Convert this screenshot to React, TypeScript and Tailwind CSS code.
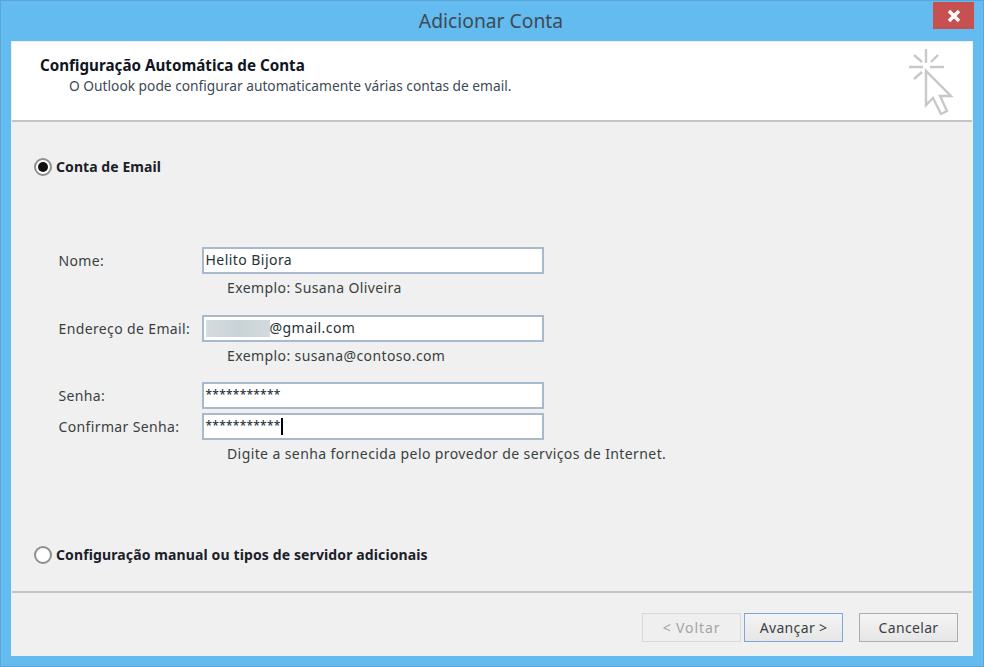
const font = { fontFamily: '"Noto Sans", sans-serif' };

function Radio({ checked }: { checked?: boolean }) {
  return (
    <span className="w-[18px] h-[18px] shrink-0 rounded-full border-2 border-[#8f8f8f] bg-white flex items-center justify-center">
      {checked && <span className="w-[10px] h-[10px] rounded-full bg-[#111]" />}
    </span>
  );
}

function Field({ label, children, mt }: { label: string; children: React.ReactNode; mt: string }) {
  return (
    <div className={`flex items-center ${mt}`}>
      <div className="w-[143px] text-[#3a3f3f] tracking-[0.37px] -ml-[0.5px] -mt-[1px]">{label}</div>
      <div className="w-[342px] h-[27px] border-2 border-[#a9b9cd] bg-white flex items-center pl-[2px] pb-[1px] text-[#263238] tracking-[0.45px] leading-[20px]">
        {children}
      </div>
    </div>
  );
}

function Hint({ text }: { text: string }) {
  return <div className="pl-[168px] h-[20px] mt-[4px] -mb-[1px] leading-[20px] text-[#3a3f3f] tracking-[0.4px]">{text}</div>;
}

function Stars() {
  return <span className="text-[12px] tracking-[0.25px] font-medium">***********</span>;
}

function Btn({ label, cls }: { label: string; cls: string }) {
  return <div className={`h-[29px] w-[99px] flex items-center justify-center border bg-gradient-to-b from-[#f4f4f4] to-[#e6e6e6] ${cls}`}>{label}</div>;
}

export default function App() {
  return (
    <div style={font} className="w-[984px] h-[667px] bg-[#63bbef] border border-[#5aa5d6] flex flex-col text-[14px] overflow-hidden">
      <div className="h-[40px] shrink-0 flex items-start relative">
        <div className="flex-1 text-center text-[19.3px] leading-[40px] text-[#3f4a55] pr-[2px]">Adicionar Conta</div>
        <div className="absolute right-[9px] top-[1px] w-[41px] h-[27px] bg-[#c75050] flex items-center justify-center">
          <svg width="14" height="14" viewBox="0 0 14 14"><path d="M2 2L12 12M12 2L2 12" stroke="#fff" strokeWidth="3.4" /></svg>
        </div>
      </div>
      <div className="mx-[10px] h-[615px] bg-[#f0f0f0] flex flex-col border border-[#e8f2f8]">
        <div className="h-[80px] shrink-0 bg-white border-b-2 border-[#c4c4c4] flex justify-between">
          <div className="pl-[28px] pt-[13px]">
            <div className="font-bold text-[15.2px] leading-[20px] text-[#10151f]">Configuração Automática de Conta</div>
            <div className="pl-[29px] leading-[20px] mt-[1px] text-[13.75px] text-[#3d4a55]">O Outlook pode configurar automaticamente várias contas de email.</div>
          </div>
          <svg className="mt-[6px] mr-[18px]" width="46" height="68" viewBox="0 0 46 68" fill="none" stroke="#c8c8c8" strokeWidth="2.4">
            <path d="M18 1V15M1 19H15M22 19H36M6 7L14 14M30 7L23 14M6 31L14 24" />
            <path d="M18 23V57L25 50L33 66L39 63L32 48H43Z" fill="#fff" />
          </svg>
        </div>
        <div className="flex-1 px-[22px] flex flex-col">
          <div className="flex items-center gap-[4px] mt-[35px] font-bold text-[#1b2028]">
            <Radio checked />
            <span className="leading-[20px] tracking-[0.07px]">Conta de Email</span>
          </div>
          <div className="pl-[25px] mt-[70px]">
            <Field label="Nome:" mt="">Helito Bijora</Field>
            <Hint text="Exemplo: Susana Oliveira" />
            <Field label="Endereço de Email:" mt="mt-[18px]">
              <span className="w-[64px] h-[17px] bg-gradient-to-r from-[#d5dcdf] via-[#c9d3d7] to-[#d3dadd]" />
              <span>@gmail.com</span>
            </Field>
            <Hint text="Exemplo: susana@contoso.com" />
            <Field label="Senha:" mt="mt-[17px]"><Stars /></Field>
            <Field label="Confirmar Senha:" mt="mt-[4px]">
              <Stars /><span className="w-[2px] h-[17px] bg-black" />
            </Field>
            <Hint text="Digite a senha fornecida pelo provedor de serviços de Internet." />
          </div>
          <div className="flex items-center gap-[4px] mt-[82px] font-bold text-[#1b2028]">
            <Radio />
            <span className="leading-[20px] tracking-[0.12px]">Configuração manual ou tipos de servidor adicionais</span>
          </div>
        </div>
        <div className="h-[64px] shrink-0 border-t-2 border-[#c4c4c4] flex justify-end items-start pt-[20px] pr-[14px] tracking-[0.35px]">
          <Btn label="< Voltar" cls="border-[#d9d9d9] !bg-none bg-[#efefef] text-[#a3a3a3] tracking-[0.9px]" />
          <Btn label="Avançar >" cls="ml-[3px] border-[#7fa8d8] text-[#3a3f44]" />
          <Btn label="Cancelar" cls="ml-[16px] border-[#adadad] text-[#3a3f44]" />
        </div>
      </div>
    </div>
  );
}
